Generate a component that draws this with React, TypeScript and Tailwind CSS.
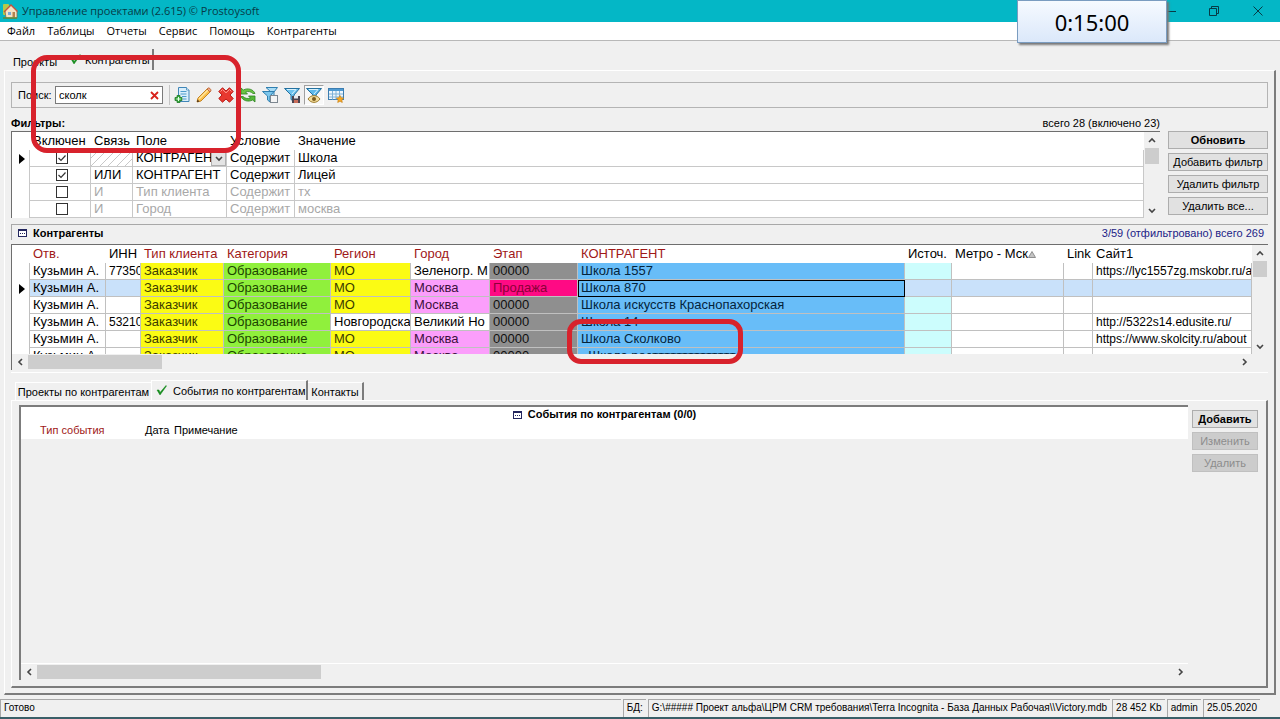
// src/App.tsx

import { useState, type ReactNode } from "react";
import clsx from "clsx";

/* ---------- Types & data ---------- */

type Filter = {
    on: boolean;
    link: string;
    field: string;
    cond: string;
    value: string;
};

type Client = {
    inn?: string;
    region: string;
    city: string;
    stage?: string;
    name: string;
    site?: string;
};

const MENU = ["Файл", "Таблицы", "Отчеты", "Сервис", "Помощь", "Контрагенты"];

const FILTERS: Filter[] = [
    { on: true, link: "", field: "КОНТРАГЕНТ", cond: "Содержит", value: "Школа" },
    { on: true, link: "ИЛИ", field: "КОНТРАГЕНТ", cond: "Содержит", value: "Лицей" },
    { on: false, link: "И", field: "Тип клиента", cond: "Содержит", value: "тх" },
    { on: false, link: "И", field: "Город", cond: "Содержит", value: "москва" },
];

const CLIENTS: Client[] = [
    { inn: "77350", region: "МО", city: "Зеленогр. М", name: "Школа 1557", site: "https://lyc1557zg.mskobr.ru/a" },
    { region: "МО", city: "Москва", stage: "Продажа", name: "Школа 870" },
    { region: "МО", city: "Москва", name: "Школа искусств Краснопахорская" },
    { inn: "53210", region: "Новгородска", city: "Великий Но", name: "Школа 14", site: "http://5322s14.edusite.ru/" },
    { region: "МО", city: "Москва", name: "Школа Сколково", site: "https://www.skolcity.ru/about" },
    { region: "МО", city: "Москва", name: "«Школа ростттттттттттттт" },
];

const SELECTED = 1;

/* ---------- Icons ---------- */

function AppIcon() {
    return (
        <svg width="16" height="16" viewBox="0 0 16 16" aria-hidden="true">
            <rect x="1" y="1" width="6" height="11" rx="1" fill="#b5c94a" />
            <path d="M3 8 9 2l6 6v7H4z" fill="#f3e3c4" stroke="#8a6a4a" strokeWidth=".8" />
            <path d="M2 9 9 2l6.5 6.5" fill="none" stroke="#c5533d" strokeWidth="1.4" />
            <rect x="6" y="9" width="3" height="3" fill="#7aa7d9" />
            <rect x="10.5" y="9" width="2.5" height="5.5" fill="#b5834f" />
            <path d="M1 15h14" stroke="#5d8b3a" strokeWidth="1.5" />
        </svg>
    );
}

function DocAddIcon() {
    return (
        <svg width="16" height="16" viewBox="0 0 16 16" aria-hidden="true">
            <path d="M4.500.5h8L15 3v11.500H4.500z" fill="#d9eefb" stroke="#3f86b8" />
            <path d="M12.500.5V3H15" fill="#fff" stroke="#3f86b8" strokeWidth=".8" />
            <path d="M6.500 4.500h6M6.500 7h6M8 9.500h4.500M9 12h3.500" stroke="#4c9ccc" />
            <path d="M3 8.500h3v2h2v3H6v2H3v-2H1v-3h2z" fill="#3aab3f" stroke="#1f7a28" strokeWidth=".8" />
            <path d="M4.500 10v4M2.500 12h4" stroke="#e8ffe8" />
        </svg>
    );
}

function PencilIcon() {
    return (
        <svg width="16" height="16" viewBox="0 0 16 16" aria-hidden="true">
            <path d="M1 15 2 11 11 2l3 3-9 9z" fill="#fbc04a" stroke="#c07a16" strokeWidth=".9" />
            <path d="m3 12 9-9" stroke="#ffe6a0" strokeWidth="1.4" />
            <path d="m11 2 1-1c1-.8 3.500 1.500 3 3l-1 1z" fill="#f2a98a" stroke="#b8622f" strokeWidth=".8" />
            <path d="m1 15 .6-2.400 1.800 1.800z" fill="#3b2a1a" />
        </svg>
    );
}

function DeleteIcon() {
    return (
        <svg width="16" height="16" viewBox="0 0 16 16" aria-hidden="true">
            <path
                d="M4.500.8 8 4 11.500.8l3.700 3.700L12 8l3.200 3.500-3.700 3.700L8 12l-3.500 3.200-3.700-3.700L4 8 .8 4.500z"
                fill="#e8382f"
                stroke="#b81a15"
                strokeLinejoin="round"
            />
            <path d="M2.500 4.500 4.500 2.500 8 5.800l3.500-3.300 2 2" fill="none" stroke="#ff9a90" />
        </svg>
    );
}

function RefreshIcon() {
    return (
        <svg width="16" height="16" viewBox="0 0 16 16" aria-hidden="true">
            <path
                d="M1 1v6h6.500L5.500 5C8 4 11 4.500 13 6.500h2C13.500 2.500 8 .5 3.300 3z"
                fill="#6cc644"
                stroke="#2c8420"
                strokeWidth=".8"
                strokeLinejoin="round"
            />
            <path
                d="M15 15V9H8.500l2 2C8 12 5 11.500 3 9.500H1C2.500 13.500 8 15.500 12.700 13z"
                fill="#56b83a"
                stroke="#2c8420"
                strokeWidth=".8"
                strokeLinejoin="round"
            />
        </svg>
    );
}

const FUNNEL = "M.5 1.500h15L10 8v6.500l-3-2V8z";

function FunnelCopyIcon() {
    return (
        <svg width="16" height="16" viewBox="0 0 16 16" aria-hidden="true">
            <path d="M4 .5h11.500L12 5v4H9V5z" fill="#a9dcf5" stroke="#2f7fb0" />
            <path d="M.5 4.500H12L8 9v6l-2.500-2V9z" fill="#7cc6ec" stroke="#2f7fb0" />
            <rect x="8.500" y="8.500" width="7" height="7" fill="#f4f4f4" stroke="#7d8790" />
        </svg>
    );
}

function FunnelSaveIcon() {
    return (
        <svg width="16" height="16" viewBox="0 0 16 16" aria-hidden="true">
            <path d={FUNNEL} fill="#6fc3ee" stroke="#24719f" />
            <path d="M3 2.500h9L8 7" fill="none" stroke="#d8f1fd" />
            <rect x="8" y="9" width="8" height="7" fill="#4a4450" />
            <rect x="10" y="9" width="4" height="2.500" fill="#e9e9ee" />
            <rect x="10" y="13" width="4" height="3" fill="#c96d5a" />
        </svg>
    );
}

function FunnelEyeIcon() {
    return (
        <svg width="16" height="16" viewBox="0 0 16 16" aria-hidden="true">
            <path d={FUNNEL} fill="#5cb8ea" stroke="#24719f" />
            <path d="M3 2.500h9L8 7" fill="none" stroke="#d8f1fd" />
            <path d="M2 12c3-4.500 9-4.500 12 0-3 4.500-9 4.500-12 0z" fill="#f3dc9a" stroke="#9c7b2c" />
            <circle cx="8" cy="12" r="2" fill="#7b5c1e" />
        </svg>
    );
}

function TableStarIcon() {
    return (
        <svg width="16" height="16" viewBox="0 0 16 16" aria-hidden="true">
            <rect x=".5" y="1.500" width="15" height="11" fill="#eef6fc" stroke="#3c7db0" />
            <rect x="1" y="2" width="14" height="2" fill="#4f9bd3" />
            <path d="M1 7h14M1 10h14M4.500 4v8.500M8 4v8.500M11.500 4v8.500" stroke="#7fb2d8" />
            <path d="m12 8.500 1.200 2.200 2.500.4-1.800 1.800.4 2.600L12 14.300l-2.300 1.200.4-2.600-1.800-1.800 2.500-.4z" fill="#f5a623" stroke="#c37d12" strokeWidth=".6" />
        </svg>
    );
}

function GridIcon() {
    return (
        <svg width="9" height="8" viewBox="0 0 9 8" aria-hidden="true" className="shrink-0">
            <rect x=".5" y=".5" width="8" height="7" fill="#fff" stroke="#23265e" />
            <path d="M0 1h9" stroke="#23265e" strokeWidth="2" />
            <path d="M2 4.500h1M4 4.500h1M6 4.500h1" stroke="#23265e" />
        </svg>
    );
}

function CheckMark() {
    return (
        <svg width="11" height="11" viewBox="0 0 11 11" aria-hidden="true" className="shrink-0">
            <path d="M1 5 3 5l1 2.500L10 .5l.5.5L4 10z" fill="#128a1a" stroke="#128a1a" strokeWidth=".5" />
        </svg>
    );
}

function RowPointer() {
    return (
        <svg width="6" height="10" viewBox="0 0 6 10" aria-hidden="true" className="ml-[7px]">
            <path d="M0 0v10l6-5z" fill="#000" />
        </svg>
    );
}

const CHEVRONS = {
    up: "M1 6l3-3 3 3",
    down: "M1 3l3 3 3-3",
    left: "M6 1 3 4l3 3",
    right: "M3 1l3 3-3 3",
};

function Chevron({ dir }: { dir: keyof typeof CHEVRONS }) {
    return (
        <svg width="8" height="8" viewBox="0 0 8 8" aria-hidden="true">
            <path d={CHEVRONS[dir]} fill="none" stroke="#454545" strokeWidth="1.600" />
        </svg>
    );
}

/* ---------- Shared controls ---------- */

function PushButton({ children, bold, disabled }: { children: ReactNode; bold?: boolean; disabled?: boolean }) {
    return (
        <button
            disabled={disabled}
            className={clsx(
                "h-[18px] w-full whitespace-nowrap border text-center leading-4",
                disabled ? "border-[#c0c0c0] bg-[#cccccc] text-[#8c8c8c]" : "border-[#adadad] bg-[#e1e1e1]",
                bold && "font-bold"
            )}
        >
            {children}
        </button>
    );
}

function VScroll() {
    return (
        <div className="flex w-4 shrink-0 flex-col bg-[#f0f0f0]">
            <button className="flex h-4 items-center justify-center" aria-label="Вверх">
                <Chevron dir="up" />
            </button>
            <div className="flex-1 px-px">
                <div className="h-4 bg-[#cdcdcd]" />
            </div>
            <button className="flex h-4 items-center justify-center" aria-label="Вниз">
                <Chevron dir="down" />
            </button>
        </div>
    );
}

function HScroll({ thumb }: { thumb: string }) {
    return (
        <div className="flex h-4 items-center bg-[#f0f0f0]">
            <button className="flex h-4 w-4 shrink-0 items-center justify-center" aria-label="Влево">
                <Chevron dir="left" />
            </button>
            <div className="flex-1">
                <div className={clsx("h-[14px] bg-[#cdcdcd]", thumb)} />
            </div>
            <button className="flex h-4 w-4 shrink-0 items-center justify-center" aria-label="Вправо">
                <Chevron dir="right" />
            </button>
        </div>
    );
}

function ToolButton({ label, pressed, children }: { label: string; pressed?: boolean; children: ReactNode }) {
    return (
        <button
            title={label}
            aria-label={label}
            className={clsx(
                "flex h-5 w-5 items-center justify-center border",
                pressed ? "border-[#a0a0a0] border-r-white border-b-white bg-[#f8f8f8]" : "border-transparent"
            )}
        >
            {children}
        </button>
    );
}

/* ---------- Panels ---------- */

function Toolbar() {
    const [query, setQuery] = useState("сколк");
    return (
        <div className="flex h-[26px] items-center border border-[#b4b4b4] pl-1.5">
            <label htmlFor="search" className="w-[37px]">Поиск:</label>
            <div className="flex h-[18px] w-[108px] items-center border border-[#7a7a7a] bg-white">
                <input
                    id="search"
                    value={query}
                    onChange={e => setQuery(e.target.value)}
                    className="w-full min-w-0 pl-[3px] outline-none"
                />
                <button aria-label="Очистить" onClick={() => setQuery("")} className="flex w-4 shrink-0 justify-center">
                    <svg width="9" height="9" viewBox="0 0 9 9" aria-hidden="true">
                        <path d="m1 1 7 7M8 1 1 8" stroke="#d8231c" strokeWidth="1.800" />
                    </svg>
                </button>
            </div>
            <div className="mr-0.5 ml-1.5 h-5 w-px bg-[#c4c4c4]" />
            <div className="flex gap-0.5">
                <ToolButton label="Добавить запись"><DocAddIcon /></ToolButton>
                <ToolButton label="Изменить запись"><PencilIcon /></ToolButton>
                <ToolButton label="Удалить запись"><DeleteIcon /></ToolButton>
                <ToolButton label="Обновить таблицу"><RefreshIcon /></ToolButton>
                <ToolButton label="Копировать фильтр"><FunnelCopyIcon /></ToolButton>
                <ToolButton label="Сохранить фильтр"><FunnelSaveIcon /></ToolButton>
                <ToolButton label="Показать фильтры" pressed><FunnelEyeIcon /></ToolButton>
                <ToolButton label="Настройка таблицы"><TableStarIcon /></ToolButton>
            </div>
        </div>
    );
}

function FilterTable() {
    const [filters, setFilters] = useState(FILTERS);

    function toggle(i: number) {
        setFilters(prev => prev.map((f, k) => (k === i ? { ...f, on: !f.on } : f)));
    }

    const cell = "overflow-hidden whitespace-nowrap border-r border-b border-[#c8c8c8] pl-[3px]";
    return (
        <div className="flex h-[86px] min-w-0 flex-1 border-t border-l border-[#6e6e6e] bg-white">
            <div className="min-w-0 flex-1 overflow-hidden">
                <table className="w-full table-fixed border-separate border-spacing-0 text-[13px] leading-4">
                    <colgroup>
                        <col className="w-[18px]" />
                        <col className="w-[61px]" />
                        <col className="w-[42px]" />
                        <col className="w-[94px]" />
                        <col className="w-[68px]" />
                        <col />
                    </colgroup>
                    <thead>
                        <tr className="h-[18px] text-left">
                            <td />
                            {["Включен", "Связь", "Поле", "Условие", "Значение"].map(h => (
                                <th key={h} className="pl-[3px] font-normal whitespace-nowrap">{h}</th>
                            ))}
                        </tr>
                    </thead>
                    <tbody>
                        {filters.map((f, i) => (
                            <tr key={i} className={clsx("h-[17px]", !f.on && "text-[#a8a8a8]")}>
                                <td className="border-r border-[#c8c8c8]">{i === 0 && <RowPointer />}</td>
                                <td className={cell}>
                                    <label className="relative mx-auto flex h-3 w-3">
                                        <input
                                            type="checkbox"
                                            aria-label={`Включен: ${f.value}`}
                                            checked={f.on}
                                            onChange={() => toggle(i)}
                                            className="h-3 w-3 appearance-none border border-[#333] bg-white"
                                        />
                                        {f.on && (
                                            <svg className="pointer-events-none absolute inset-0" width="12" height="12" viewBox="0 0 12 12" aria-hidden="true">
                                                <path d="M2.500 6 5 8.500l4.500-5" fill="none" stroke="#333" strokeWidth="1.200" />
                                            </svg>
                                        )}
                                    </label>
                                </td>
                                <td
                                    className={clsx(
                                        cell,
                                        i === 0 && "bg-[repeating-linear-gradient(135deg,#fff_0_5px,#c8c8c8_5px_6px)]"
                                    )}
                                >
                                    {f.link}
                                </td>
                                <td className={cell}>
                                    {i === 0 ? (
                                        <div className="flex items-center">
                                            <span className="min-w-0 flex-1 overflow-hidden">{f.field}</span>
                                            <button
                                                aria-label="Выбрать поле"
                                                className="flex h-[15px] w-[15px] shrink-0 items-center justify-center border border-[#b0b0b0] bg-[#e4e4e4]"
                                            >
                                                <Chevron dir="down" />
                                            </button>
                                        </div>
                                    ) : (
                                        f.field
                                    )}
                                </td>
                                <td className={cell}>{f.cond}</td>
                                <td className={cell}>{f.value}</td>
                            </tr>
                        ))}
                    </tbody>
                </table>
            </div>
            <VScroll />
        </div>
    );
}

const CLIENT_HEADS = [
    { title: "Отв.", red: true },
    { title: "ИНН" },
    { title: "Тип клиента", red: true },
    { title: "Категория", red: true },
    { title: "Регион", red: true },
    { title: "Город", red: true },
    { title: "Этап", red: true },
    { title: "КОНТРАГЕНТ", red: true },
    { title: "Источ." },
    { title: "Метро - Мск", sorted: true },
    { title: "Link" },
    { title: "Сайт1" },
];

function ClientTable() {
    const cell = "overflow-hidden whitespace-nowrap border-r border-b border-[#c0c0c0] pl-[3px]";
    return (
        <div className="border-t border-l border-[#6e6e6e]">
            <div className="flex h-[109px] bg-white">
                <div className="min-w-0 flex-1 overflow-hidden">
                    <table className="w-full table-fixed border-separate border-spacing-0 text-[13px] leading-4">
                        <colgroup>
                            <col className="w-[18px]" />
                            <col className="w-[76px]" />
                            <col className="w-[35px]" />
                            <col className="w-[83px]" />
                            <col className="w-[107px]" />
                            <col className="w-[80px]" />
                            <col className="w-[79px]" />
                            <col className="w-[88px]" />
                            <col className="w-[327px]" />
                            <col className="w-[47px]" />
                            <col className="w-[112px]" />
                            <col className="w-[29px]" />
                            <col />
                        </colgroup>
                        <thead>
                            <tr className="h-[18px] text-left">
                                <td />
                                {CLIENT_HEADS.map(h => (
                                    <th
                                        key={h.title}
                                        className={clsx("pl-[3px] font-normal whitespace-nowrap", h.red && "text-[#a01818]")}
                                    >
                                        {h.title}
                                        {h.sorted && (
                                            <svg className="inline" width="8" height="7" viewBox="0 0 8 7" aria-hidden="true">
                                                <path d="M4 .5 7.500 6.500h-7z" fill="#c4c4c4" stroke="#8f8f8f" />
                                            </svg>
                                        )}
                                    </th>
                                ))}
                            </tr>
                        </thead>
                        <tbody>
                            {CLIENTS.map((c, i) => {
                                const sel = i === SELECTED;
                                const plain = sel ? "bg-[#c9e1fa]" : "bg-white";
                                return (
                                    <tr key={c.name} className="h-[17px]">
                                        <td className="border-r border-[#c0c0c0]">{sel && <RowPointer />}</td>
                                        <td className={clsx(cell, plain)}>Кузьмин А.</td>
                                        <td className={clsx(cell, plain, "text-[12px]")}>{c.inn}</td>
                                        <td className={clsx(cell, "bg-[#fbfb14] text-[#3c3c00]")}>Заказчик</td>
                                        <td className={clsx(cell, "bg-[#90f03c] text-[#1c4400]")}>Образование</td>
                                        <td className={clsx(cell, c.region === "МО" ? "bg-[#fbfb14] text-[#3c3c00]" : plain)}>{c.region}</td>
                                        <td className={clsx(cell, c.city === "Москва" ? "bg-[#fb9efb] text-[#3c103c]" : plain)}>{c.city}</td>
                                        <td className={clsx(cell, c.stage ? "bg-[#ff0a84] text-[#8c0038]" : "bg-[#8f8f8f] text-[#101010]")}>
                                            {c.stage ?? "00000"}
                                        </td>
                                        <td className={clsx(cell, "bg-[#68bdf8] text-[#04243c]", sel && "outline outline-1 -outline-offset-1 outline-black")}>
                                            {c.name}
                                        </td>
                                        <td className={clsx(cell, sel ? "bg-[#c9e1fa]" : "bg-[#ccfdfd]")} />
                                        <td className={clsx(cell, plain)} />
                                        <td className={clsx(cell, plain)} />
                                        <td className={clsx(cell, plain, "text-[12px]")}>{c.site}</td>
                                    </tr>
                                );
                            })}
                        </tbody>
                    </table>
                </div>
                <VScroll />
            </div>
            <div className="pr-4">
                <HScroll thumb="w-[134px]" />
            </div>
        </div>
    );
}

function EventsPanel() {
    return (
        <div className="flex min-h-0 flex-1 flex-col">
            <div role="tablist" className="flex h-5 items-end pl-1">
                <button role="tab" aria-selected="false" className="h-[18px] w-[136px] border-t border-l border-white whitespace-nowrap">
                    Проекты по контрагентам
                </button>
                <button
                    role="tab"
                    aria-selected="true"
                    className="flex h-5 w-[157px] items-center gap-1.5 border-t border-r-2 border-l border-t-white border-r-[#7c7c7c] border-l-white pl-1 whitespace-nowrap"
                >
                    <CheckMark />
                    События по контрагентам
                </button>
                <button
                    role="tab"
                    aria-selected="false"
                    className="h-[18px] w-[56px] border-t border-r-2 border-t-white border-r-[#7c7c7c] whitespace-nowrap"
                >
                    Контакты
                </button>
            </div>
            <div className="flex min-h-0 flex-1 gap-1 border-t border-r-2 border-b-2 border-l border-t-white border-r-[#7c7c7c] border-b-[#7c7c7c] border-l-white pt-1 pr-2 pb-1.5 pl-[7px]">
                <section className="flex min-w-0 flex-1 flex-col border-t-2 border-l-2 border-[#7c7c7c]">
                    <div className="h-8 bg-white">
                        <h2 className="flex items-center justify-center gap-1.5 leading-[15px] font-bold">
                            <GridIcon />
                            События по контрагентам (0/0)
                        </h2>
                        <table className="w-full table-fixed leading-4">
                            <thead>
                                <tr className="text-left">
                                    <th className="w-[124px] pl-[19px] font-normal text-[#a01818]">Тип события</th>
                                    <th className="w-[29px] font-normal">Дата</th>
                                    <th className="font-normal">Примечание</th>
                                </tr>
                            </thead>
                        </table>
                    </div>
                    <div className="flex-1" />
                    <div className="border-t border-white">
                        <HScroll thumb="w-[284px]" />
                    </div>
                </section>
                <div className="flex w-[66px] shrink-0 flex-col gap-1 pt-[5px]">
                    <PushButton bold>Добавить</PushButton>
                    <PushButton disabled>Изменить</PushButton>
                    <PushButton disabled>Удалить</PushButton>
                </div>
            </div>
        </div>
    );
}

/* ---------- Page ---------- */

export default function App() {
    const status = "border-t border-l border-[#a8a8a8] px-[3px] whitespace-nowrap";
    return (
        <div className="relative flex h-screen flex-col overflow-hidden bg-[#f0f0f0] font-['Liberation_Sans',Arial,sans-serif] text-[11px] leading-4 text-black">
            <header className="flex h-[22px] shrink-0 items-center gap-1 bg-[#04b7c6] pl-0.5 font-['Open_Sans',sans-serif] text-[#073b46]">
                <AppIcon />
                <h1 className="flex-1">Управление проектами (2.615) © Prostoysoft</h1>
                <button aria-label="Свернуть" className="flex w-[43px] justify-center">
                    <svg width="10" height="10" viewBox="0 0 10 10"><path d="M0 5.500h10" stroke="#073b46" /></svg>
                </button>
                <button aria-label="Развернуть" className="flex w-[35px] justify-center">
                    <svg width="10" height="10" viewBox="0 0 10 10">
                        <path d="M.5 2.500h7v7h-7zM2.500 2.500v-2h7v7h-2" fill="none" stroke="#073b46" />
                    </svg>
                </button>
                <button aria-label="Закрыть" className="flex w-[45px] justify-center">
                    <svg width="10" height="10" viewBox="0 0 10 10"><path d="m.5.5 9 9M9.500.5l-9 9" stroke="#073b46" /></svg>
                </button>
            </header>

            <nav className="flex h-[19px] shrink-0 items-center gap-3 border-b border-[#b8b8b8] bg-white pl-[7px] font-['Open_Sans',sans-serif]">
                {MENU.map(m => (
                    <button key={m}>{m}</button>
                ))}
            </nav>

            <div className="flex min-h-0 flex-1 flex-col px-1 pt-2">
                <div role="tablist" className="flex h-[21px] items-center pl-1">
                    <button role="tab" aria-selected="false" className="w-[54px] pt-1">Проекты</button>
                    <button
                        role="tab"
                        aria-selected="true"
                        className="flex h-full w-[92px] items-center gap-1 border-r-2 border-[#7c7c7c] pl-2"
                    >
                        <CheckMark />
                        Контрагенты
                    </button>
                </div>

                <main className="flex min-h-0 flex-1 flex-col border-t border-r-2 border-b-2 border-l border-t-white border-r-[#7c7c7c] border-b-[#7c7c7c] border-l-white pt-[11px] pr-1.5 pb-[5px] pl-1.5">
                    <Toolbar />

                    <div className="mt-[7px] flex gap-2">
                        <div className="flex min-w-0 flex-1 flex-col">
                            <div className="flex justify-between">
                                <h2 className="font-bold">Фильтры:</h2>
                                <span>всего 28 (включено 23)</span>
                            </div>
                            <FilterTable />
                        </div>
                        <div className="flex w-[100px] shrink-0 flex-col gap-1 pt-4">
                            <PushButton bold>Обновить</PushButton>
                            <PushButton>Добавить фильтр</PushButton>
                            <PushButton>Удалить фильтр</PushButton>
                            <PushButton>Удалить все...</PushButton>
                        </div>
                    </div>

                    <div className="mt-1.5 mb-1 flex h-4 shrink-0 items-center gap-1.5 border-t border-l border-[#a8a8a8] pr-1 pl-1.5">
                        <GridIcon />
                        <h2 className="flex-1 font-bold">Контрагенты</h2>
                        <span className="text-[#1c1c86]">3/59 (отфильтровано) всего 269</span>
                    </div>
                    <ClientTable />

                    <div className="mt-0.5 mb-[7px] h-px shrink-0 bg-white" />
                    <EventsPanel />
                </main>
            </div>

            <footer className="mt-1 flex h-[20px] shrink-0 items-stretch gap-0.5 border-b-2 border-[#3a5f68] pr-5 text-[10px]">
                <span className={clsx(status, "flex-1")}>Готово</span>
                <span className={status}>БД:</span>
                <span className={status}>G:\##### Проект альфа\ЦРМ CRM требования\Terra Incognita - База Данных Рабочая\\Victory.mdb</span>
                <span className={status}>28 452 Kb</span>
                <span className={status}>admin</span>
                <span className={status}>25.05.2020</span>
            </footer>

            {/* Session timer floats above the window */}
            <div
                role="timer"
                className="absolute top-0 right-[113px] flex h-[43px] w-[150px] items-center justify-center border border-[#7a9cc0] bg-linear-to-b from-[#f6faff] to-[#dbe8fa] font-['Noto_Sans',sans-serif] text-[22px] shadow-[2px_2px_2px_#777]"
            >
                0:15:00
            </div>

            {/* Red marker outlines */}
            <div className="pointer-events-none absolute top-[55px] left-[31px] h-[98px] w-[210px] rounded-[16px] border-[5px] border-[#d8222c]" />
            <div className="pointer-events-none absolute top-[319px] left-[567px] h-[45px] w-[176px] rounded-[14px] border-[5px] border-[#d8222c]" />
        </div>
    );
}
